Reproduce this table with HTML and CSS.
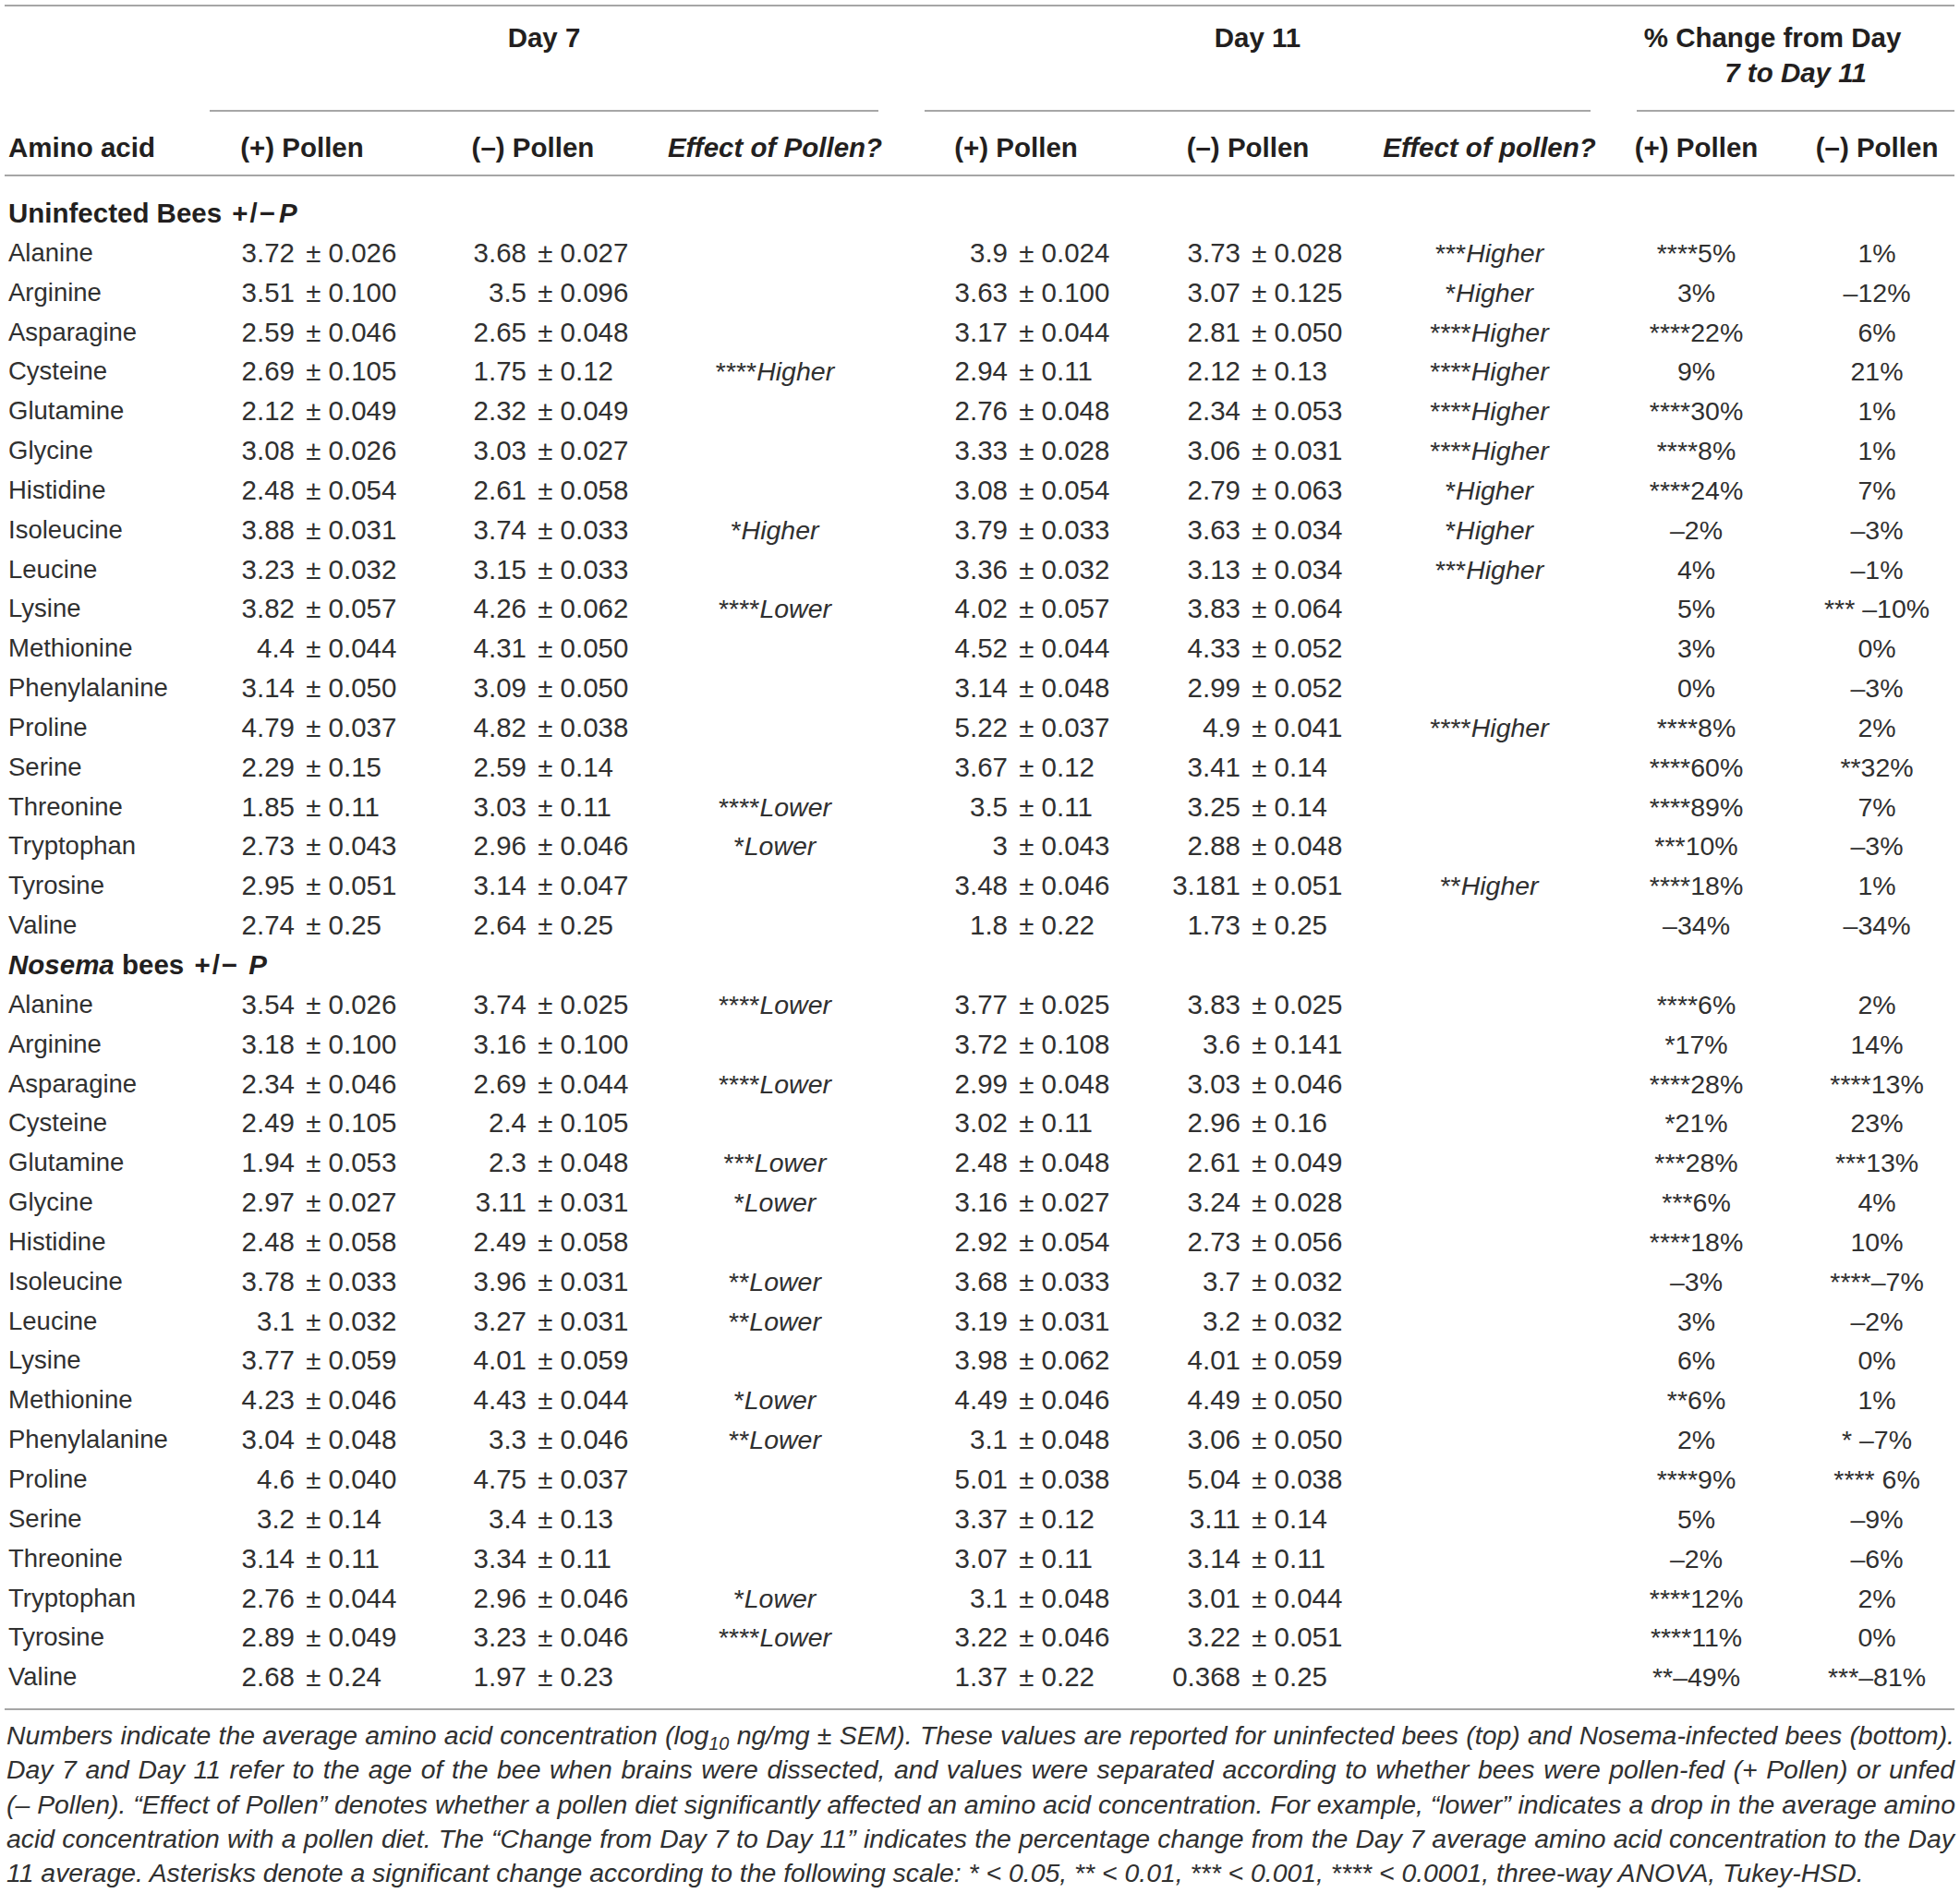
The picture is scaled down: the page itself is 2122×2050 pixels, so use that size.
FILE: index.html
```html
<!DOCTYPE html>
<html lang="en">
<head>
<meta charset="utf-8">
<title>Amino acid concentrations</title>
<link rel="stylesheet" href="styles.css">
</head>
<body>
<div class="page">
<table class="t">
<colgroup>
<col class="c1"><col class="c2"><col class="c3"><col class="c4"><col class="c5"><col class="c6"><col class="c7"><col class="c8"><col class="c9">
</colgroup>
<thead>
<tr class="h1">
<th></th>
<th colspan="3"><div class="grp">Day 7</div></th>
<th colspan="3"><div class="grp">Day 11</div></th>
<th colspan="2"><div class="grp end"><span class="pl1">% Change from Day</span><i>7 to Day 11</i></div></th>
</tr>
<tr class="h2">
<th class="nm">Amino acid</th>
<th>(+) Pollen</th>
<th>(–) Pollen</th>
<th><i>Effect of Pollen?</i></th>
<th>(+) Pollen</th>
<th>(–) Pollen</th>
<th><i>Effect of pollen?</i></th>
<th>(+) Pollen</th>
<th class="q">(–) Pollen</th>
</tr>
</thead>
<tbody>
<tr class="sec first"><td colspan="9">Uninfected Bees <span class="pm">+/−</span><i>P</i></td></tr>
<tr><td class="nm">Alanine</td><td class="n p2"><span class="l">3.72</span><span class="r"> ± 0.026</span></td><td class="n p3"><span class="l">3.68</span><span class="r"> ± 0.027</span></td><td class="e"></td><td class="n p5"><span class="l">3.9</span><span class="r"> ± 0.024</span></td><td class="n p6"><span class="l">3.73</span><span class="r"> ± 0.028</span></td><td class="e">***<i>Higher</i></td><td class="c">****5%</td><td class="c q">1%</td></tr>
<tr><td class="nm">Arginine</td><td class="n p2"><span class="l">3.51</span><span class="r"> ± 0.100</span></td><td class="n p3"><span class="l">3.5</span><span class="r"> ± 0.096</span></td><td class="e"></td><td class="n p5"><span class="l">3.63</span><span class="r"> ± 0.100</span></td><td class="n p6"><span class="l">3.07</span><span class="r"> ± 0.125</span></td><td class="e">*<i>Higher</i></td><td class="c">3%</td><td class="c q">–12%</td></tr>
<tr><td class="nm">Asparagine</td><td class="n p2"><span class="l">2.59</span><span class="r"> ± 0.046</span></td><td class="n p3"><span class="l">2.65</span><span class="r"> ± 0.048</span></td><td class="e"></td><td class="n p5"><span class="l">3.17</span><span class="r"> ± 0.044</span></td><td class="n p6"><span class="l">2.81</span><span class="r"> ± 0.050</span></td><td class="e">****<i>Higher</i></td><td class="c">****22%</td><td class="c q">6%</td></tr>
<tr><td class="nm">Cysteine</td><td class="n p2"><span class="l">2.69</span><span class="r"> ± 0.105</span></td><td class="n p3"><span class="l">1.75</span><span class="r"> ± 0.12</span></td><td class="e">****<i>Higher</i></td><td class="n p5"><span class="l">2.94</span><span class="r"> ± 0.11</span></td><td class="n p6"><span class="l">2.12</span><span class="r"> ± 0.13</span></td><td class="e">****<i>Higher</i></td><td class="c">9%</td><td class="c q">21%</td></tr>
<tr><td class="nm">Glutamine</td><td class="n p2"><span class="l">2.12</span><span class="r"> ± 0.049</span></td><td class="n p3"><span class="l">2.32</span><span class="r"> ± 0.049</span></td><td class="e"></td><td class="n p5"><span class="l">2.76</span><span class="r"> ± 0.048</span></td><td class="n p6"><span class="l">2.34</span><span class="r"> ± 0.053</span></td><td class="e">****<i>Higher</i></td><td class="c">****30%</td><td class="c q">1%</td></tr>
<tr><td class="nm">Glycine</td><td class="n p2"><span class="l">3.08</span><span class="r"> ± 0.026</span></td><td class="n p3"><span class="l">3.03</span><span class="r"> ± 0.027</span></td><td class="e"></td><td class="n p5"><span class="l">3.33</span><span class="r"> ± 0.028</span></td><td class="n p6"><span class="l">3.06</span><span class="r"> ± 0.031</span></td><td class="e">****<i>Higher</i></td><td class="c">****8%</td><td class="c q">1%</td></tr>
<tr><td class="nm">Histidine</td><td class="n p2"><span class="l">2.48</span><span class="r"> ± 0.054</span></td><td class="n p3"><span class="l">2.61</span><span class="r"> ± 0.058</span></td><td class="e"></td><td class="n p5"><span class="l">3.08</span><span class="r"> ± 0.054</span></td><td class="n p6"><span class="l">2.79</span><span class="r"> ± 0.063</span></td><td class="e">*<i>Higher</i></td><td class="c">****24%</td><td class="c q">7%</td></tr>
<tr><td class="nm">Isoleucine</td><td class="n p2"><span class="l">3.88</span><span class="r"> ± 0.031</span></td><td class="n p3"><span class="l">3.74</span><span class="r"> ± 0.033</span></td><td class="e">*<i>Higher</i></td><td class="n p5"><span class="l">3.79</span><span class="r"> ± 0.033</span></td><td class="n p6"><span class="l">3.63</span><span class="r"> ± 0.034</span></td><td class="e">*<i>Higher</i></td><td class="c">–2%</td><td class="c q">–3%</td></tr>
<tr><td class="nm">Leucine</td><td class="n p2"><span class="l">3.23</span><span class="r"> ± 0.032</span></td><td class="n p3"><span class="l">3.15</span><span class="r"> ± 0.033</span></td><td class="e"></td><td class="n p5"><span class="l">3.36</span><span class="r"> ± 0.032</span></td><td class="n p6"><span class="l">3.13</span><span class="r"> ± 0.034</span></td><td class="e">***<i>Higher</i></td><td class="c">4%</td><td class="c q">–1%</td></tr>
<tr><td class="nm">Lysine</td><td class="n p2"><span class="l">3.82</span><span class="r"> ± 0.057</span></td><td class="n p3"><span class="l">4.26</span><span class="r"> ± 0.062</span></td><td class="e">****<i>Lower</i></td><td class="n p5"><span class="l">4.02</span><span class="r"> ± 0.057</span></td><td class="n p6"><span class="l">3.83</span><span class="r"> ± 0.064</span></td><td class="e"></td><td class="c">5%</td><td class="c q">*** –10%</td></tr>
<tr><td class="nm">Methionine</td><td class="n p2"><span class="l">4.4</span><span class="r"> ± 0.044</span></td><td class="n p3"><span class="l">4.31</span><span class="r"> ± 0.050</span></td><td class="e"></td><td class="n p5"><span class="l">4.52</span><span class="r"> ± 0.044</span></td><td class="n p6"><span class="l">4.33</span><span class="r"> ± 0.052</span></td><td class="e"></td><td class="c">3%</td><td class="c q">0%</td></tr>
<tr><td class="nm">Phenylalanine</td><td class="n p2"><span class="l">3.14</span><span class="r"> ± 0.050</span></td><td class="n p3"><span class="l">3.09</span><span class="r"> ± 0.050</span></td><td class="e"></td><td class="n p5"><span class="l">3.14</span><span class="r"> ± 0.048</span></td><td class="n p6"><span class="l">2.99</span><span class="r"> ± 0.052</span></td><td class="e"></td><td class="c">0%</td><td class="c q">–3%</td></tr>
<tr><td class="nm">Proline</td><td class="n p2"><span class="l">4.79</span><span class="r"> ± 0.037</span></td><td class="n p3"><span class="l">4.82</span><span class="r"> ± 0.038</span></td><td class="e"></td><td class="n p5"><span class="l">5.22</span><span class="r"> ± 0.037</span></td><td class="n p6"><span class="l">4.9</span><span class="r"> ± 0.041</span></td><td class="e">****<i>Higher</i></td><td class="c">****8%</td><td class="c q">2%</td></tr>
<tr><td class="nm">Serine</td><td class="n p2"><span class="l">2.29</span><span class="r"> ± 0.15</span></td><td class="n p3"><span class="l">2.59</span><span class="r"> ± 0.14</span></td><td class="e"></td><td class="n p5"><span class="l">3.67</span><span class="r"> ± 0.12</span></td><td class="n p6"><span class="l">3.41</span><span class="r"> ± 0.14</span></td><td class="e"></td><td class="c">****60%</td><td class="c q">**32%</td></tr>
<tr><td class="nm">Threonine</td><td class="n p2"><span class="l">1.85</span><span class="r"> ± 0.11</span></td><td class="n p3"><span class="l">3.03</span><span class="r"> ± 0.11</span></td><td class="e">****<i>Lower</i></td><td class="n p5"><span class="l">3.5</span><span class="r"> ± 0.11</span></td><td class="n p6"><span class="l">3.25</span><span class="r"> ± 0.14</span></td><td class="e"></td><td class="c">****89%</td><td class="c q">7%</td></tr>
<tr><td class="nm">Tryptophan</td><td class="n p2"><span class="l">2.73</span><span class="r"> ± 0.043</span></td><td class="n p3"><span class="l">2.96</span><span class="r"> ± 0.046</span></td><td class="e">*<i>Lower</i></td><td class="n p5"><span class="l">3</span><span class="r"> ± 0.043</span></td><td class="n p6"><span class="l">2.88</span><span class="r"> ± 0.048</span></td><td class="e"></td><td class="c">***10%</td><td class="c q">–3%</td></tr>
<tr><td class="nm">Tyrosine</td><td class="n p2"><span class="l">2.95</span><span class="r"> ± 0.051</span></td><td class="n p3"><span class="l">3.14</span><span class="r"> ± 0.047</span></td><td class="e"></td><td class="n p5"><span class="l">3.48</span><span class="r"> ± 0.046</span></td><td class="n p6"><span class="l">3.181</span><span class="r"> ± 0.051</span></td><td class="e">**<i>Higher</i></td><td class="c">****18%</td><td class="c q">1%</td></tr>
<tr><td class="nm">Valine</td><td class="n p2"><span class="l">2.74</span><span class="r"> ± 0.25</span></td><td class="n p3"><span class="l">2.64</span><span class="r"> ± 0.25</span></td><td class="e"></td><td class="n p5"><span class="l">1.8</span><span class="r"> ± 0.22</span></td><td class="n p6"><span class="l">1.73</span><span class="r"> ± 0.25</span></td><td class="e"></td><td class="c">–34%</td><td class="c q">–34%</td></tr>
<tr class="sec"><td colspan="9"><i>Nosema</i> bees <span class="pm">+/−</span> <i>P</i></td></tr>
<tr><td class="nm">Alanine</td><td class="n p2"><span class="l">3.54</span><span class="r"> ± 0.026</span></td><td class="n p3"><span class="l">3.74</span><span class="r"> ± 0.025</span></td><td class="e">****<i>Lower</i></td><td class="n p5"><span class="l">3.77</span><span class="r"> ± 0.025</span></td><td class="n p6"><span class="l">3.83</span><span class="r"> ± 0.025</span></td><td class="e"></td><td class="c">****6%</td><td class="c q">2%</td></tr>
<tr><td class="nm">Arginine</td><td class="n p2"><span class="l">3.18</span><span class="r"> ± 0.100</span></td><td class="n p3"><span class="l">3.16</span><span class="r"> ± 0.100</span></td><td class="e"></td><td class="n p5"><span class="l">3.72</span><span class="r"> ± 0.108</span></td><td class="n p6"><span class="l">3.6</span><span class="r"> ± 0.141</span></td><td class="e"></td><td class="c">*17%</td><td class="c q">14%</td></tr>
<tr><td class="nm">Asparagine</td><td class="n p2"><span class="l">2.34</span><span class="r"> ± 0.046</span></td><td class="n p3"><span class="l">2.69</span><span class="r"> ± 0.044</span></td><td class="e">****<i>Lower</i></td><td class="n p5"><span class="l">2.99</span><span class="r"> ± 0.048</span></td><td class="n p6"><span class="l">3.03</span><span class="r"> ± 0.046</span></td><td class="e"></td><td class="c">****28%</td><td class="c q">****13%</td></tr>
<tr><td class="nm">Cysteine</td><td class="n p2"><span class="l">2.49</span><span class="r"> ± 0.105</span></td><td class="n p3"><span class="l">2.4</span><span class="r"> ± 0.105</span></td><td class="e"></td><td class="n p5"><span class="l">3.02</span><span class="r"> ± 0.11</span></td><td class="n p6"><span class="l">2.96</span><span class="r"> ± 0.16</span></td><td class="e"></td><td class="c">*21%</td><td class="c q">23%</td></tr>
<tr><td class="nm">Glutamine</td><td class="n p2"><span class="l">1.94</span><span class="r"> ± 0.053</span></td><td class="n p3"><span class="l">2.3</span><span class="r"> ± 0.048</span></td><td class="e">***<i>Lower</i></td><td class="n p5"><span class="l">2.48</span><span class="r"> ± 0.048</span></td><td class="n p6"><span class="l">2.61</span><span class="r"> ± 0.049</span></td><td class="e"></td><td class="c">***28%</td><td class="c q">***13%</td></tr>
<tr><td class="nm">Glycine</td><td class="n p2"><span class="l">2.97</span><span class="r"> ± 0.027</span></td><td class="n p3"><span class="l">3.11</span><span class="r"> ± 0.031</span></td><td class="e">*<i>Lower</i></td><td class="n p5"><span class="l">3.16</span><span class="r"> ± 0.027</span></td><td class="n p6"><span class="l">3.24</span><span class="r"> ± 0.028</span></td><td class="e"></td><td class="c">***6%</td><td class="c q">4%</td></tr>
<tr><td class="nm">Histidine</td><td class="n p2"><span class="l">2.48</span><span class="r"> ± 0.058</span></td><td class="n p3"><span class="l">2.49</span><span class="r"> ± 0.058</span></td><td class="e"></td><td class="n p5"><span class="l">2.92</span><span class="r"> ± 0.054</span></td><td class="n p6"><span class="l">2.73</span><span class="r"> ± 0.056</span></td><td class="e"></td><td class="c">****18%</td><td class="c q">10%</td></tr>
<tr><td class="nm">Isoleucine</td><td class="n p2"><span class="l">3.78</span><span class="r"> ± 0.033</span></td><td class="n p3"><span class="l">3.96</span><span class="r"> ± 0.031</span></td><td class="e">**<i>Lower</i></td><td class="n p5"><span class="l">3.68</span><span class="r"> ± 0.033</span></td><td class="n p6"><span class="l">3.7</span><span class="r"> ± 0.032</span></td><td class="e"></td><td class="c">–3%</td><td class="c q">****–7%</td></tr>
<tr><td class="nm">Leucine</td><td class="n p2"><span class="l">3.1</span><span class="r"> ± 0.032</span></td><td class="n p3"><span class="l">3.27</span><span class="r"> ± 0.031</span></td><td class="e">**<i>Lower</i></td><td class="n p5"><span class="l">3.19</span><span class="r"> ± 0.031</span></td><td class="n p6"><span class="l">3.2</span><span class="r"> ± 0.032</span></td><td class="e"></td><td class="c">3%</td><td class="c q">–2%</td></tr>
<tr><td class="nm">Lysine</td><td class="n p2"><span class="l">3.77</span><span class="r"> ± 0.059</span></td><td class="n p3"><span class="l">4.01</span><span class="r"> ± 0.059</span></td><td class="e"></td><td class="n p5"><span class="l">3.98</span><span class="r"> ± 0.062</span></td><td class="n p6"><span class="l">4.01</span><span class="r"> ± 0.059</span></td><td class="e"></td><td class="c">6%</td><td class="c q">0%</td></tr>
<tr><td class="nm">Methionine</td><td class="n p2"><span class="l">4.23</span><span class="r"> ± 0.046</span></td><td class="n p3"><span class="l">4.43</span><span class="r"> ± 0.044</span></td><td class="e">*<i>Lower</i></td><td class="n p5"><span class="l">4.49</span><span class="r"> ± 0.046</span></td><td class="n p6"><span class="l">4.49</span><span class="r"> ± 0.050</span></td><td class="e"></td><td class="c">**6%</td><td class="c q">1%</td></tr>
<tr><td class="nm">Phenylalanine</td><td class="n p2"><span class="l">3.04</span><span class="r"> ± 0.048</span></td><td class="n p3"><span class="l">3.3</span><span class="r"> ± 0.046</span></td><td class="e">**<i>Lower</i></td><td class="n p5"><span class="l">3.1</span><span class="r"> ± 0.048</span></td><td class="n p6"><span class="l">3.06</span><span class="r"> ± 0.050</span></td><td class="e"></td><td class="c">2%</td><td class="c q">* –7%</td></tr>
<tr><td class="nm">Proline</td><td class="n p2"><span class="l">4.6</span><span class="r"> ± 0.040</span></td><td class="n p3"><span class="l">4.75</span><span class="r"> ± 0.037</span></td><td class="e"></td><td class="n p5"><span class="l">5.01</span><span class="r"> ± 0.038</span></td><td class="n p6"><span class="l">5.04</span><span class="r"> ± 0.038</span></td><td class="e"></td><td class="c">****9%</td><td class="c q">**** 6%</td></tr>
<tr><td class="nm">Serine</td><td class="n p2"><span class="l">3.2</span><span class="r"> ± 0.14</span></td><td class="n p3"><span class="l">3.4</span><span class="r"> ± 0.13</span></td><td class="e"></td><td class="n p5"><span class="l">3.37</span><span class="r"> ± 0.12</span></td><td class="n p6"><span class="l">3.11</span><span class="r"> ± 0.14</span></td><td class="e"></td><td class="c">5%</td><td class="c q">–9%</td></tr>
<tr><td class="nm">Threonine</td><td class="n p2"><span class="l">3.14</span><span class="r"> ± 0.11</span></td><td class="n p3"><span class="l">3.34</span><span class="r"> ± 0.11</span></td><td class="e"></td><td class="n p5"><span class="l">3.07</span><span class="r"> ± 0.11</span></td><td class="n p6"><span class="l">3.14</span><span class="r"> ± 0.11</span></td><td class="e"></td><td class="c">–2%</td><td class="c q">–6%</td></tr>
<tr><td class="nm">Tryptophan</td><td class="n p2"><span class="l">2.76</span><span class="r"> ± 0.044</span></td><td class="n p3"><span class="l">2.96</span><span class="r"> ± 0.046</span></td><td class="e">*<i>Lower</i></td><td class="n p5"><span class="l">3.1</span><span class="r"> ± 0.048</span></td><td class="n p6"><span class="l">3.01</span><span class="r"> ± 0.044</span></td><td class="e"></td><td class="c">****12%</td><td class="c q">2%</td></tr>
<tr><td class="nm">Tyrosine</td><td class="n p2"><span class="l">2.89</span><span class="r"> ± 0.049</span></td><td class="n p3"><span class="l">3.23</span><span class="r"> ± 0.046</span></td><td class="e">****<i>Lower</i></td><td class="n p5"><span class="l">3.22</span><span class="r"> ± 0.046</span></td><td class="n p6"><span class="l">3.22</span><span class="r"> ± 0.051</span></td><td class="e"></td><td class="c">****11%</td><td class="c q">0%</td></tr>
<tr class="lastrow"><td class="nm">Valine</td><td class="n p2"><span class="l">2.68</span><span class="r"> ± 0.24</span></td><td class="n p3"><span class="l">1.97</span><span class="r"> ± 0.23</span></td><td class="e"></td><td class="n p5"><span class="l">1.37</span><span class="r"> ± 0.22</span></td><td class="n p6"><span class="l">0.368</span><span class="r"> ± 0.25</span></td><td class="e"></td><td class="c">**–49%</td><td class="c q">***–81%</td></tr>
</tbody>
</table>
<div class="foot">
<div class="ln">Numbers indicate the average amino acid concentration (log<sub>10</sub> ng/mg ± SEM). These values are reported for uninfected bees (top) and Nosema-infected bees (bottom).</div>
<div class="ln">Day 7 and Day 11 refer to the age of the bee when brains were dissected, and values were separated according to whether bees were pollen-fed (+ Pollen) or unfed</div>
<div class="ln">(– Pollen). “Effect of Pollen” denotes whether a pollen diet significantly affected an amino acid concentration. For example, “lower” indicates a drop in the average amino</div>
<div class="ln">acid concentration with a pollen diet. The “Change from Day 7 to Day 11” indicates the percentage change from the Day 7 average amino acid concentration to the Day</div>
<div class="ln lastln">11 average. Asterisks denote a significant change according to the following scale: * &lt; 0.05, ** &lt; 0.01, *** &lt; 0.001, **** &lt; 0.0001, three-way ANOVA, Tukey-HSD.</div>
</div>
</div>
</body>
</html>
```

FILE: styles.css
```css
html, body {
  margin: 0;
  padding: 0;
  background: #ffffff;
}

.page {
  padding: 5px 6px 0 5px;
  font-family: "Liberation Sans", Arial, Helvetica, sans-serif;
  color: #231f20;
}

.t {
  border-collapse: separate;
  border-spacing: 0;
  table-layout: fixed;
  width: 2111px;
}

.c1 { width: 197px; }
.c2 { width: 250px; }
.c3 { width: 250px; }
.c4 { width: 274px; }
.c5 { width: 248px; }
.c6 { width: 254px; }
.c7 { width: 269px; }
.c8 { width: 179px; }
.c9 { width: 190px; }

th, td {
  padding: 0;
  font-size: 28.5px;
  white-space: nowrap;
}

th {
  font-size: 29.5px;
  font-weight: 700;
  text-align: center;
  color: #231f20;
}

.h1 th {
  border-top: 2px solid #a6a6a6;
  vertical-align: top;
}

.grp {
  margin: 0 25px;
  padding: 14.6px 0 21.4px;
  height: 76px;
  line-height: 38px;
  border-bottom: 2px solid #a6a6a6;
}

.grp.end {
  margin-right: 0;
}

.grp i {
  display: block;
}

.pl1 {
  display: block;
  padding-right: 50px;
}

.h2 th {
  padding: 20px 0 10px;
  line-height: 38px;
  border-bottom: 2px solid #a6a6a6;
}

.h2 th.nm {
  text-align: left;
  padding-left: 4px;
}

th.q {
  padding-left: 22px;
}

td {
  line-height: 42.85px;
  font-weight: 400;
  vertical-align: top;
  color: #303030;
}

.sec td {
  font-size: 29.5px;
  font-weight: 700;
  padding-left: 4px;
  color: #231f20;
}

.sec .pm {
  letter-spacing: 2px;
  padding: 0 2px 0 3px;
}

.sec.first td {
  padding-top: 19px;
}

td.nm {
  padding-left: 4px;
  font-size: 27.5px;
}

td.n {
  font-size: 29.5px;
}

td.n .l {
  display: inline-block;
  width: 80px;
  text-align: right;
}

td.n .r {
  white-space: pre;
  margin-left: 4px;
}

.p2 { padding-left: 37px; }
.p3 { padding-left: 38px; }
.p5 { padding-left: 35px; }
.p6 { padding-left: 39px; }

td.e,
td.c {
  text-align: center;
}

td.q {
  padding-left: 22px;
}

.lastrow td {
  padding-bottom: 11.7px;
  border-bottom: 2px solid #a6a6a6;
}

.foot {
  width: 2109px;
  margin: 9.4px 0 0 2px;
  font-style: italic;
  font-size: 28.4px;
  line-height: 37.25px;
  color: #303030;
}

.foot .ln {
  white-space: nowrap;
  text-align: justify;
  text-align-last: justify;
}

.foot .ln.lastln {
  text-align-last: left;
}

.foot sub {
  font-size: 70%;
  line-height: 0;
  vertical-align: -0.3em;
}
```
